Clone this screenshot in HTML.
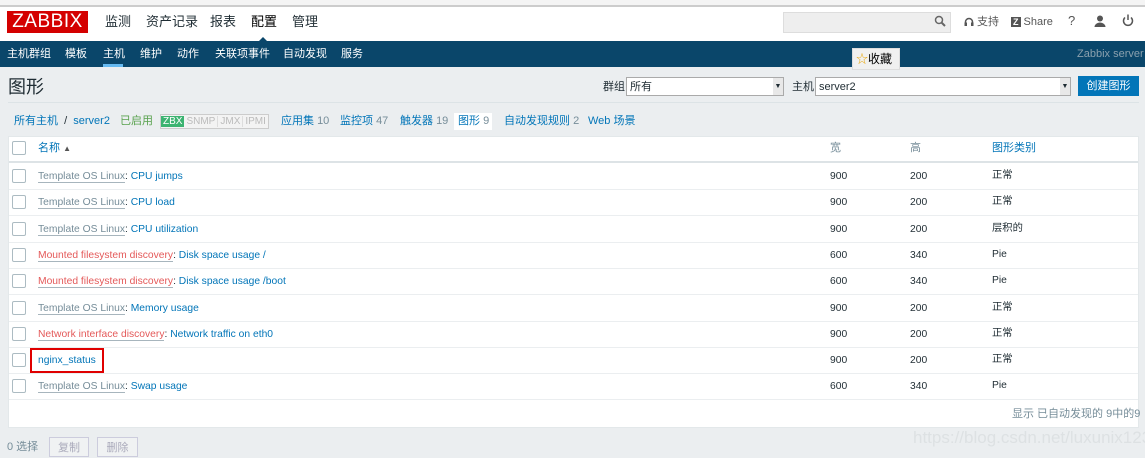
<!DOCTYPE html>
<html><head><meta charset="utf-8">
<style>
*{margin:0;padding:0;box-sizing:border-box}
body{width:1145px;height:457px;overflow:hidden;background:#ebeef0;font-family:"Liberation Sans","Noto Sans CJK SC",sans-serif;font-size:11px;color:#1f2c33;position:relative;line-height:14px}
.a{position:absolute;white-space:nowrap;line-height:14px}
a,.l{color:#0275b8;text-decoration:none}
.g{color:#768d99}
.o{color:#e45959}
.u{border-bottom:1px solid #a7b5bd}
.cb{position:absolute;left:12px;width:14px;height:14px;border:1px solid #acbbc2;background:#fff;border-radius:2px}
.rt{font-size:10.3px}
</style></head><body>
<div class="a" style="left:0;top:0;width:1145px;height:5px;background:#f4f4f4"></div>
<div class="a" style="left:0;top:5px;width:1145px;height:2px;background:#ccc"></div>
<div class="a" style="left:0;top:7px;width:1145px;height:34px;background:#fff"></div>
<div class="a" style="left:7px;top:11px;width:81px;height:22px;background:#d40000;color:#fff;font-size:19px;line-height:22px;text-align:center;letter-spacing:0.5px">ZABBIX</div>
<div class="a" style="left:105px;top:13px;font-size:13px;line-height:18px">监测</div>
<div class="a" style="left:146px;top:13px;font-size:13px;line-height:18px">资产记录</div>
<div class="a" style="left:210px;top:13px;font-size:13px;line-height:18px">报表</div>
<div class="a" style="left:251px;top:13px;font-size:13px;line-height:18px;color:#000">配置</div>
<div class="a" style="left:292px;top:13px;font-size:13px;line-height:18px">管理</div>
<div class="a" style="left:783px;top:12px;width:168px;height:21px;background:#eee;border:1px solid #ddd"></div>
<svg class="a" style="left:934px;top:15px" width="12" height="12" viewBox="0 0 12 12"><circle cx="5" cy="5" r="3.5" fill="none" stroke="#666" stroke-width="1.5"/><path d="M7.5 7.5L11 11" stroke="#666" stroke-width="2"/></svg>
<svg class="a" style="left:964px;top:17px" width="10" height="10" viewBox="0 0 10 10"><path d="M1.5 8V5a3.5 3.5 0 0 1 7 0v3" fill="none" stroke="#555" stroke-width="1.5"/><rect x="0.5" y="5.5" width="2.5" height="3.5" fill="#555"/><rect x="7" y="5.5" width="2.5" height="3.5" fill="#555"/></svg>
<div class="a" style="left:977px;top:15px;color:#555">支持</div>
<div class="a" style="left:1011px;top:15px;color:#555"><span style="background:#555;color:#fff;font-weight:bold;font-size:9px;padding:0 2px">Z</span> Share</div>
<div class="a" style="left:1068px;top:14px;color:#555;font-size:13px">?</div>
<svg class="a" style="left:1094px;top:15px" width="12" height="12" viewBox="0 0 12 12"><circle cx="6" cy="3.5" r="3" fill="#555"/><path d="M0.5 12a5.5 4.5 0 0 1 11 0z" fill="#555"/></svg>
<svg class="a" style="left:1122px;top:14px" width="12" height="13" viewBox="0 0 12 13"><path d="M3 3.5a4.5 4.5 0 1 0 6 0" fill="none" stroke="#555" stroke-width="1.5"/><path d="M6 0.5v5.5" stroke="#555" stroke-width="1.5"/></svg>
<div class="a" style="left:0;top:41px;width:1145px;height:26px;background:#0a466a"></div>
<div class="a" style="left:258px;top:37px;width:0;height:0;border-left:5px solid transparent;border-right:5px solid transparent;border-bottom:5px solid #0a466a"></div>
<div class="a" style="left:7px;top:47px;color:#fff">主机群组</div>
<div class="a" style="left:65px;top:47px;color:#fff">模板</div>
<div class="a" style="left:103px;top:47px;color:#fff">主机</div>
<div class="a" style="left:103px;top:64px;width:20px;height:3px;background:#65b9f0"></div>
<div class="a" style="left:140px;top:47px;color:#fff">维护</div>
<div class="a" style="left:177px;top:47px;color:#fff">动作</div>
<div class="a" style="left:215px;top:47px;color:#fff">关联项事件</div>
<div class="a" style="left:283px;top:47px;color:#fff">自动发现</div>
<div class="a" style="left:341px;top:47px;color:#fff">服务</div>
<div class="a" style="left:1077px;top:47px;color:#8aa0ae">Zabbix server</div>
<div class="a" style="left:852px;top:48px;width:48px;height:22px;background:#f0f0f0;border:1px solid #ddd;font-size:12px;line-height:20px;padding-left:3px;color:#000"><span style="color:#e8a400">☆</span>收藏</div>
<div class="a" style="left:8px;top:76px;font-size:18px;line-height:22px">图形</div>
<div class="a" style="left:603px;top:80px">群组</div>
<div class="a" style="left:626px;top:77px;width:158px;height:19px;background:#fff;border:1px solid #aaa;padding:2px 3px">所有</div>
<div class="a" style="left:773px;top:78px;width:10px;height:17px;background:#e8e8e8;font-size:7px;line-height:17px;text-align:center">▼</div>
<div class="a" style="left:792px;top:80px">主机</div>
<div class="a" style="left:815px;top:77px;width:256px;height:19px;background:#fff;border:1px solid #aaa;padding:2px 3px">server2</div>
<div class="a" style="left:1060px;top:78px;width:10px;height:17px;background:#e8e8e8;font-size:7px;line-height:17px;text-align:center">▼</div>
<div class="a" style="left:1078px;top:76px;width:61px;height:20px;background:#0275b8;color:#fff;text-align:center;line-height:20px">创建图形</div>
<div class="a" style="left:8px;top:102px;width:1131px;height:1px;background:#dce3e6"></div>
<div class="a" style="left:14px;top:114px"><span class="l">所有主机</span> &nbsp;/&nbsp; <span class="l">server2</span></div>
<div class="a" style="left:120px;top:114px;color:#59a24e">已启用</div>
<div class="a" style="left:160px;top:114px;border:1px solid #ccc;font-size:10px;line-height:13px;background:#f3f3f3"><span style="background:#3cb371;color:#fff;padding:0 2px">ZBX</span><span style="color:#bbb;padding:0 2px">SNMP</span><span style="color:#bbb;padding:0 2px;border-left:1px solid #ddd">JMX</span><span style="color:#bbb;padding:0 2px;border-left:1px solid #ddd">IPMI</span></div>
<div class="a" style="left:281px;top:114px"><span class="l">应用集</span> <span class="g">10</span></div>
<div class="a" style="left:340px;top:114px"><span class="l">监控项</span> <span class="g">47</span></div>
<div class="a" style="left:400px;top:114px"><span class="l">触发器</span> <span class="g">19</span></div>
<div class="a" style="left:454px;top:113px;width:38px;height:17px;background:#fff;padding:1px 0 0 4px"><span class="l">图形</span> <span class="g">9</span></div>
<div class="a" style="left:504px;top:114px"><span class="l">自动发现规则</span> <span class="g">2</span></div>
<div class="a" style="left:588px;top:114px"><span class="l">Web 场景</span></div>

<div class="a" style="left:8px;top:136px;width:1131px;height:292px;background:#fff;border:1px solid #e3e8ea"></div>
<div class="cb" style="top:141px"></div>
<div class="a l" style="left:38px;top:141px">名称 <span style="font-size:8px;color:#555">▲</span></div>
<div class="a" style="left:830px;top:141px;color:#768d99">宽</div>
<div class="a" style="left:910px;top:141px;color:#768d99">高</div>
<div class="a l" style="left:992px;top:141px">图形类别</div>
<div class="a" style="left:9px;top:161px;width:1129px;height:2px;background:#dde3e6"></div>

<div id="rows"></div>
<script>
var r=[["g","Template OS Linux","CPU jumps",900,200,"正常"],["g","Template OS Linux","CPU load",900,200,"正常"],["g","Template OS Linux","CPU utilization",900,200,"层积的"],["o","Mounted filesystem discovery","Disk space usage /",600,340,"Pie"],["o","Mounted filesystem discovery","Disk space usage /boot",600,340,"Pie"],["g","Template OS Linux","Memory usage",900,200,"正常"],["o","Network interface discovery","Network traffic on eth0",900,200,"正常"],["","","nginx_status",900,200,"正常"],["g","Template OS Linux","Swap usage",600,340,"Pie"]];
var h="";
r.forEach(function(x,i){var t=163+i*26.3;var c=Math.round(t+13);
h+='<div class="cb" style="top:'+(c-7)+'px"></div>';
h+='<div class="a rt" style="left:38px;top:'+(c-6)+'px">'+(x[0]?'<span class="'+x[0]+' u">'+x[1]+'</span>: ':'')+'<span class="l">'+x[2]+'</span></div>';
h+='<div class="a rt" style="left:830px;top:'+(c-6)+'px">'+x[3]+'</div><div class="a rt" style="left:910px;top:'+(c-6)+'px">'+x[4]+'</div><div class="a rt" style="left:992px;top:'+(c-7)+'px">'+x[5]+'</div>';
h+='<div class="a" style="left:9px;top:'+(t+26)+'px;width:1129px;height:1px;background:#ebeef0"></div>';});
document.getElementById("rows").innerHTML=h;
</script>
<div class="a" style="left:30px;top:348px;width:74px;height:25px;border:2px solid #e00000"></div>
<div class="a" style="left:1012px;top:407px;color:#768d99">显示 已自动发现的 9中的9</div>
<div class="a" style="left:7px;top:440px;color:#768d99">0 选择</div>
<div class="a" style="left:49px;top:437px;width:40px;height:20px;border:1px solid #ccd;background:#f0f2f3;color:#aab;text-align:center;line-height:20px">复制</div>
<div class="a" style="left:97px;top:437px;width:41px;height:20px;border:1px solid #ccd;background:#f0f2f3;color:#aab;text-align:center;line-height:20px">删除</div>
<div class="a" style="left:913px;top:428px;color:#dde1e3;font-size:17px;line-height:20px">https://blog.csdn.net/luxunix123</div>
</body></html>
